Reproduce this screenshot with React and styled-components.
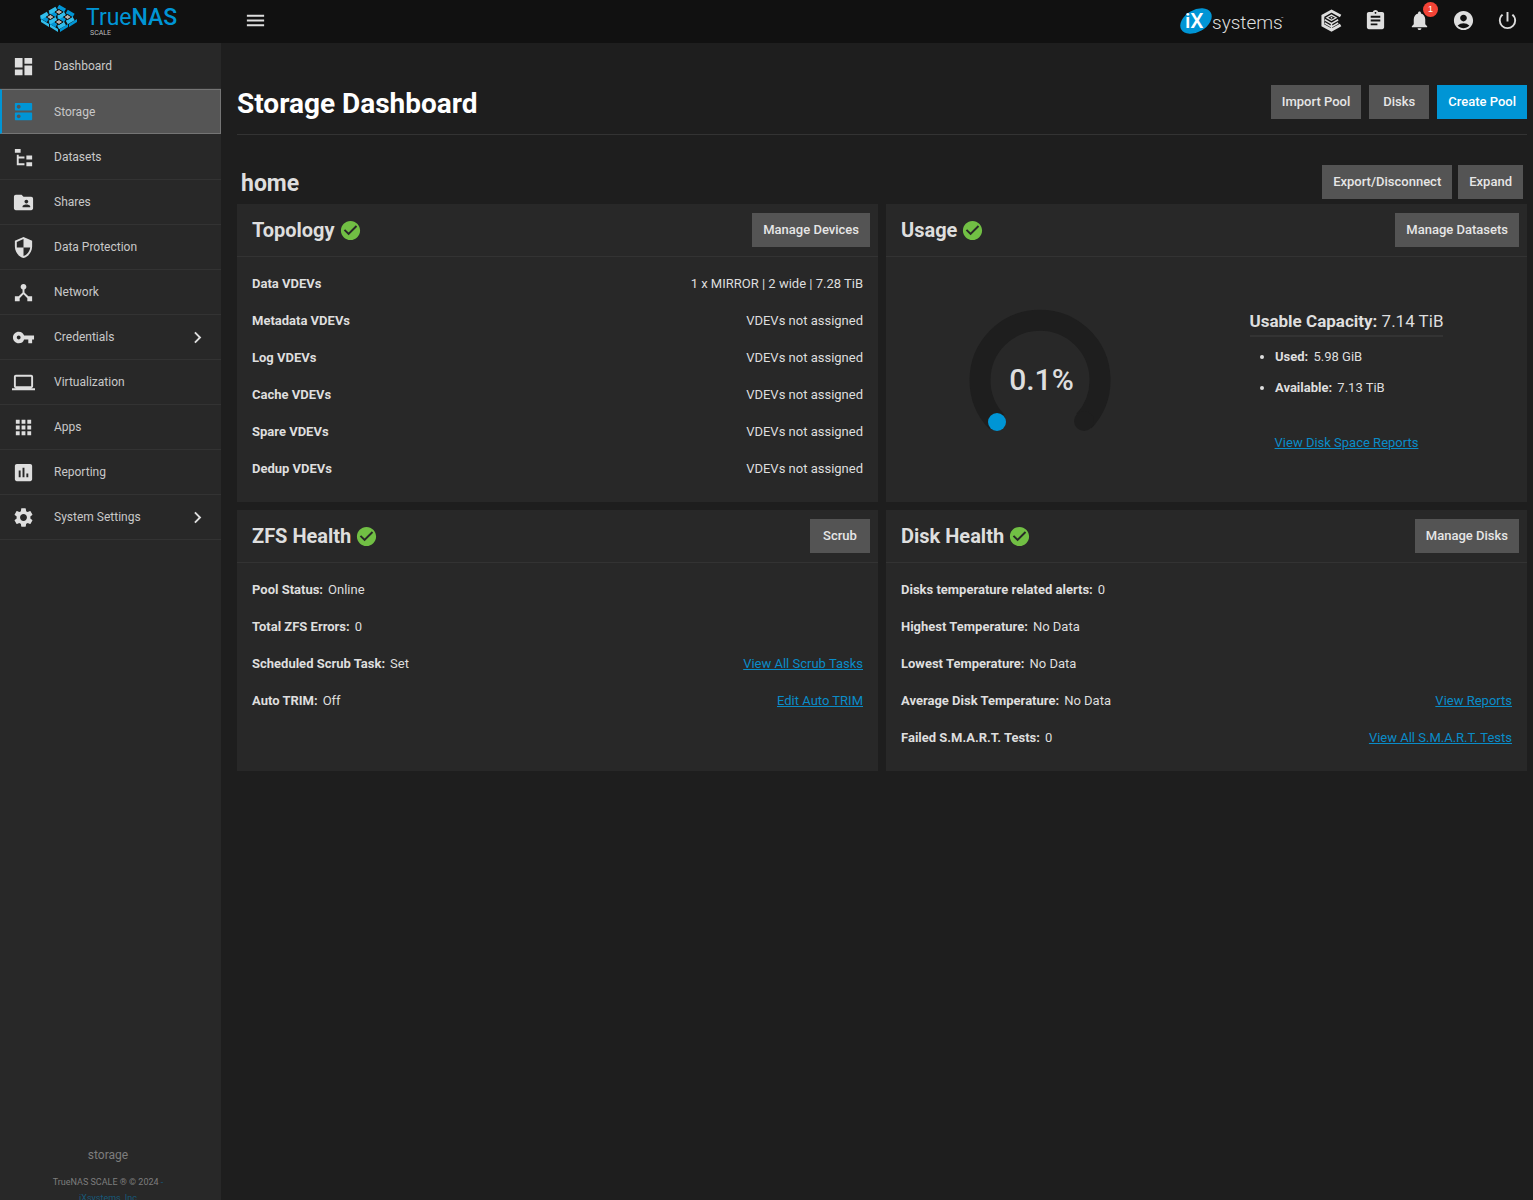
import React from "react"
import styled, { createGlobalStyle, css } from "styled-components"
import {
    MdAccountCircle,
    MdApps,
    MdAssessment,
    MdAssignment,
    MdCheckCircle,
    MdChevronRight,
    MdDashboard,
    MdDeviceHub,
    MdDns,
    MdFolderShared,
    MdLaptop,
    MdMenu,
    MdNotifications,
    MdPowerSettingsNew,
    MdSecurity,
    MdSettings,
    MdVpnKey,
} from "react-icons/md"

const colors = {
    bg: `#1e1e1e`,
    bar: `#111111`,
    panel: `#282828`,
    button: `#545454`,
    line: `#333333`,
    text: `#dedede`,
    blue: `#0095d5`,
    lightBlue: `#31beec`,
    link: `#0a8cc8`,
    green: `#71bf44`,
    red: `#f44336`,
}

const font = `Roboto, "Liberation Sans", sans-serif`

const GlobalStyle = createGlobalStyle`
    * {
        box-sizing: border-box;
    }
    body {
        margin: 0;
        background: ${ colors.bg };
        color: ${ colors.text };
        font-family: ${ font };
        font-size: 13px;
    }
    h1, h2, h3, p, ul, dl, dd {
        margin: 0;
        padding: 0;
    }
`

const Page = styled.div`
    display: flex;
    flex-direction: column;
    height: 100vh;
    overflow: hidden;
`

/* Top bar */

const TopBar = styled.header`
    display: flex;
    align-items: center;
    flex: none;
    height: 43px;
    padding-bottom: 2px;
    background: ${ colors.bar };
`

const Brand = styled.a`
    display: flex;
    width: 221px;
    padding-left: 40px;
`

const IconButton = styled.button`
    display: flex;
    position: relative;
    padding: 0;
    border: 0;
    background: none;
    color: ${ colors.text };
    cursor: pointer;

    svg {
        width: 23px;
        height: 23px;
    }
`

const MenuToggle = styled(IconButton)`
    margin-left: 23px;
`

const TopActions = styled.div`
    display: flex;
    align-items: center;
    gap: 21px;
    margin-left: auto;
    padding-right: 14px;
`

const CompanyLink = styled.a`
    display: flex;
    margin-right: 12px;
`

const Badge = styled.span`
    position: absolute;
    top: -7px;
    right: -7px;
    width: 15px;
    border-radius: 50%;
    background: ${ colors.red };
    color: #ffffff;
    font-size: 9px;
    line-height: 15px;
    text-align: center;
`

/* Sidebar */

const Columns = styled.div`
    display: flex;
    flex: 1;
    min-height: 0;
`

const Sidebar = styled.aside`
    display: flex;
    flex-direction: column;
    flex: none;
    width: 221px;
    background: ${ colors.panel };
`

const Nav = styled.nav`
    flex: 1;
    padding-top: 1px;
`

const NavItem = styled.a`
    display: flex;
    align-items: center;
    height: 45px;
    padding: 0 12px;
    border-bottom: 1px solid ${ colors.line };
    color: #c8c8c8;
    font-size: 12px;
    text-decoration: none;

    svg {
        width: 23px;
        height: 23px;
        color: ${ colors.text };
    }

    span {
        flex: 1;
        margin-left: 19px;
    }

    ${ ({ $active }) => $active && css`
        margin-bottom: 1px;
        padding-left: 10px;
        border: 1px solid #757575;
        border-left: 2px solid ${ colors.blue };
        background: #555555;

        svg {
            color: ${ colors.blue };
        }
    ` }
`

const Footer = styled.footer`
    flex: none;
    height: 54px;
    padding-right: 5px;
    overflow: hidden;
    color: #7d7d7d;
    font-size: 9px;
    line-height: 16px;
    text-align: center;

    p {
        margin-bottom: 10px;
        font-size: 12px;
        line-height: 18px;
    }

    a {
        color: #17597a;
        text-decoration: none;
    }
`

/* Content */

const Main = styled.main`
    flex: 1;
    padding: 42px 6px 0 16px;
    overflow: auto;
`

const PageHeader = styled.div`
    display: flex;
    align-items: center;
    justify-content: space-between;
    padding-bottom: 15px;
    border-bottom: 1px solid ${ colors.line };
`

const PageTitle = styled.h1`
    padding-top: 3px;
    color: #ffffff;
    font-size: 28px;
    line-height: 31px;
`

const PoolHeader = styled.div`
    display: flex;
    align-items: center;
    justify-content: space-between;
    padding: 30px 4px 5px;
`

const PoolTitle = styled.h2`
    padding-top: 3px;
    font-size: 23px;
    line-height: 31px;
`

const ButtonRow = styled.div`
    display: flex;
    gap: ${ ({ $tight }) => $tight ? `6px` : `8px` };
`

const Button = styled.button`
    min-width: 60px;
    height: 34px;
    padding: 0 11px 2px;
    border: 0;
    background: ${ ({ $primary }) => $primary ? colors.blue : colors.button };
    color: ${ ({ $primary }) => $primary ? `#ffffff` : `#e6e6e6` };
    font-family: ${ font };
    font-size: 13px;
    font-weight: 500;
    cursor: pointer;
`

const Cards = styled.div`
    display: grid;
    grid-template-columns: repeat(2, minmax(0, 1fr));
    gap: 8px;
`

const CardBox = styled.section`
    display: flex;
    flex-direction: column;
    background: ${ colors.panel };
`

const CardHeader = styled.div`
    display: flex;
    align-items: center;
    justify-content: space-between;
    height: 53px;
    padding: 0 8px 0 15px;
    border-bottom: 1px solid ${ colors.line };
`

const CardTitle = styled.h3`
    display: flex;
    align-items: center;
    gap: 4px;
    font-size: 20px;
    font-weight: 700;

    svg {
        width: 23px;
        height: 23px;
        color: ${ colors.green };
    }
`

const Rows = styled.dl`
    padding: 8px 15px 15px;
`

const Row = styled.div`
    display: flex;
    align-items: center;
    height: 37px;

    dt {
        margin-right: 5px;
        font-weight: 700;
    }

    a {
        margin-left: auto;
    }

    ${ ({ $spread }) => $spread && css`
        justify-content: space-between;
    ` }
`

const Link = styled.a`
    color: ${ colors.link };
`

const UsageBody = styled.div`
    display: flex;
    flex: 1;
    padding-right: 27px;
`

const UsageHalf = styled.div`
    display: flex;
    flex: 1;
    flex-direction: column;
    align-items: center;
    justify-content: center;
`

const Gauge = styled.div`
    display: grid;
    place-items: center;

    svg, span {
        grid-area: 1 / 1;
    }

    span {
        padding-left: 4px;
        font-size: 30px;
        font-weight: 500;
    }
`

const Capacity = styled.p`
    padding-bottom: 3px;
    border-bottom: 2px solid ${ colors.line };
    font-size: 17px;
    line-height: 22px;
`

const UsageList = styled.ul`
    align-self: stretch;
    margin: 4px 0 32px;
    padding-left: 82px;

    li {
        line-height: 31px;
    }

    b {
        margin-right: 2px;
    }
`

const FileTreeIcon = () => (
    <svg viewBox="0 0 24 24" fill="currentColor" aria-hidden="true">
        <path d="M3,3H9V7H3V3M15,10H21V14H15V10M15,17H21V21H15V17M13,13H7V18H13V20H7L5,20V9H7V11H13V13Z" />
    </svg>
)

const TrueCommandIcon = () => (
    <svg viewBox="0 0 24 24" fill="none" stroke="currentColor" aria-hidden="true">
        <path d="M21.5 7.4 12 2.2 3 7.2v9.8l9 5 9.5-5.4" strokeWidth="3" />
        <path d="M12 6.4l4.8 2.7L12 11.8 7.2 9.1z" strokeWidth="1.4" />
        <path d="M12 8.2v1.8M5 11.2l7 4 7-4M5 14.6l7 4 7-4M12 15v6" strokeWidth="1.6" />
    </svg>
)

/* The mark is a 2x2 isometric lattice: i runs down-right, j runs down-left */
const point = (i, j) => [19 + 8.6 * (i - j), 4 + 5 * (i + j)]

const bar = (from, to) => {
    const [x1, y1] = point(...from)
    const [x2, y2] = point(...to)
    return `M${ x1 } ${ y1 }L${ x2 } ${ y2 }`
}

const downRight = []
const downLeft = []
for (let a = 0; a < 2; a++) {
    for (let b = 0; b < 3; b++) {
        downRight.push(bar([a - 0.1, b], [a + 0.7, b]))
        downLeft.push(bar([b, a + 0.3], [b, a + 1.1]))
    }
}

const cells = [[0.5, 0.5], [1.5, 0.5], [0.5, 1.5], [1.5, 1.5]].map(([i, j]) => point(i, j))

const TrueNasLogo = () => (
    <svg width="138" height="36" viewBox="0 0 138 36" role="img" aria-label="TrueNAS SCALE">
        <path d="M1 16v3l8 5v-3zM10 21v3l8 5v-3z" fill={colors.lightBlue} />
        <path d="M37 16v3l-8 5v-3zM28 21v3l-8 5v-3z" fill={colors.blue} />
        <path d={downRight.join(``)} stroke={colors.blue} strokeWidth="4" />
        <path d={downLeft.join(``)} stroke={colors.lightBlue} strokeWidth="4" />
        {cells.map(([x, y]) => (
            <path key={`${ x }-${ y }`} d={`M${ x - 4 } ${ y }l4-2.5 4 2.5-4 2.5z`} fill="#b8b4b0" stroke={colors.bar} />
        ))}
        <text x="46" y="22" fill={colors.blue} fontFamily="Roboto, sans-serif" fontSize="23">
            True<tspan fontWeight="500">NAS</tspan>
        </text>
        <text x="50" y="32" fill="#bdbdbd" fontFamily="Roboto, sans-serif" fontSize="7">SCALE</text>
    </svg>
)

const IxLogo = () => (
    <svg width="108" height="32" viewBox="0 0 108 32" role="img" aria-label="iXsystems">
        <ellipse cx="17" cy="16" rx="17" ry="11" transform="rotate(-30 17 16)" fill={colors.blue} />
        <text x="6" y="23" fill="#ffffff" fontFamily="Roboto, sans-serif" fontSize="21" fontWeight="500">iX</text>
        <text x="33" y="24" fill="#dedede" fontFamily="Roboto, sans-serif" fontSize="19" fontWeight="300">systems</text>
        <text x="102" y="15" fill="#dedede" fontFamily="Roboto, sans-serif" fontSize="4">™</text>
    </svg>
)

const GaugeArc = () => (
    <svg width="142" height="142" viewBox="0 0 142 142" fill="none" aria-hidden="true">
        <path d="M28 113A60 60 0 1 1 115 112" stroke={colors.bg} strokeWidth="21" />
        <circle cx="115" cy="112" r="10" fill={colors.bg} />
        <circle cx="28" cy="113" r="9" fill={colors.blue} />
    </svg>
)

const navItems = [
    { label: `Dashboard`, icon: MdDashboard },
    { label: `Storage`, icon: MdDns, active: true },
    { label: `Datasets`, icon: FileTreeIcon },
    { label: `Shares`, icon: MdFolderShared },
    { label: `Data Protection`, icon: MdSecurity },
    { label: `Network`, icon: MdDeviceHub },
    { label: `Credentials`, icon: MdVpnKey, more: true },
    { label: `Virtualization`, icon: MdLaptop },
    { label: `Apps`, icon: MdApps },
    { label: `Reporting`, icon: MdAssessment },
    { label: `System Settings`, icon: MdSettings, more: true },
]

const vdevs = [
    [`Data VDEVs`, `1 x MIRROR | 2 wide | 7.28 TiB`],
    [`Metadata VDEVs`, `VDEVs not assigned`],
    [`Log VDEVs`, `VDEVs not assigned`],
    [`Cache VDEVs`, `VDEVs not assigned`],
    [`Spare VDEVs`, `VDEVs not assigned`],
    [`Dedup VDEVs`, `VDEVs not assigned`],
]

const zfsHealth = [
    [`Pool Status:`, `Online`],
    [`Total ZFS Errors:`, `0`],
    [`Scheduled Scrub Task:`, `Set`, `View All Scrub Tasks`],
    [`Auto TRIM:`, `Off`, `Edit Auto TRIM`],
]

const diskHealth = [
    [`Disks temperature related alerts:`, `0`],
    [`Highest Temperature:`, `No Data`],
    [`Lowest Temperature:`, `No Data`],
    [`Average Disk Temperature:`, `No Data`, `View Reports`],
    [`Failed S.M.A.R.T. Tests:`, `0`, `View All S.M.A.R.T. Tests`],
]

const Card = ({ title, action, children }) => (
    <CardBox>
        <CardHeader>
            <CardTitle>{title} <MdCheckCircle /></CardTitle>
            <Button type="button">{action}</Button>
        </CardHeader>
        {children}
    </CardBox>
)

const DataRows = ({ rows, spread }) => (
    <Rows>
        {rows.map(([name, value, link]) => (
            <Row key={name} $spread={spread}>
                <dt>{name}</dt>
                <dd>{value}</dd>
                {link && <Link href="#">{link}</Link>}
            </Row>
        ))}
    </Rows>
)

const App = () => (
    <Page>
        <GlobalStyle />
        <TopBar>
            <Brand href="#"><TrueNasLogo /></Brand>
            <MenuToggle type="button" aria-label="Toggle menu"><MdMenu /></MenuToggle>
            <TopActions>
                <CompanyLink href="#"><IxLogo /></CompanyLink>
                <IconButton type="button" aria-label="TrueCommand"><TrueCommandIcon /></IconButton>
                <IconButton type="button" aria-label="Jobs"><MdAssignment /></IconButton>
                <IconButton type="button" aria-label="Alerts">
                    <MdNotifications />
                    <Badge>1</Badge>
                </IconButton>
                <IconButton type="button" aria-label="Account"><MdAccountCircle /></IconButton>
                <IconButton type="button" aria-label="Power"><MdPowerSettingsNew /></IconButton>
            </TopActions>
        </TopBar>
        <Columns>
            <Sidebar>
                <Nav>
                    {navItems.map(({ label, icon: Icon, active, more }) => (
                        <NavItem key={label} href="#" $active={active}>
                            <Icon />
                            <span>{label}</span>
                            {more && <MdChevronRight />}
                        </NavItem>
                    ))}
                </Nav>
                <Footer>
                    <p>storage</p>
                    TrueNAS SCALE ® © 2024 <a href="#">-<br />iXsystems, Inc</a>
                </Footer>
            </Sidebar>
            <Main>
                <PageHeader>
                    <PageTitle>Storage Dashboard</PageTitle>
                    <ButtonRow>
                        <Button type="button">Import Pool</Button>
                        <Button type="button">Disks</Button>
                        <Button type="button" $primary>Create Pool</Button>
                    </ButtonRow>
                </PageHeader>
                <PoolHeader>
                    <PoolTitle>home</PoolTitle>
                    <ButtonRow $tight>
                        <Button type="button">Export/Disconnect</Button>
                        <Button type="button">Expand</Button>
                    </ButtonRow>
                </PoolHeader>
                <Cards>
                    <Card title="Topology" action="Manage Devices">
                        <DataRows rows={vdevs} spread />
                    </Card>
                    <Card title="Usage" action="Manage Datasets">
                        <UsageBody>
                            <UsageHalf>
                                <Gauge>
                                    <GaugeArc />
                                    <span>0.1%</span>
                                </Gauge>
                            </UsageHalf>
                            <UsageHalf>
                                <Capacity><b>Usable Capacity:</b> 7.14 TiB</Capacity>
                                <UsageList>
                                    <li><b>Used:</b> 5.98 GiB</li>
                                    <li><b>Available:</b> 7.13 TiB</li>
                                </UsageList>
                                <Link href="#">View Disk Space Reports</Link>
                            </UsageHalf>
                        </UsageBody>
                    </Card>
                    <Card title="ZFS Health" action="Scrub">
                        <DataRows rows={zfsHealth} />
                    </Card>
                    <Card title="Disk Health" action="Manage Disks">
                        <DataRows rows={diskHealth} />
                    </Card>
                </Cards>
            </Main>
        </Columns>
    </Page>
)

export default App
